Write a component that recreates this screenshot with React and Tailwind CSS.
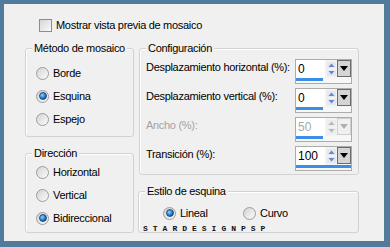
import React from 'react';

const font = { fontFamily: '"Liberation Sans", Arial, sans-serif' };

const Radio = ({ checked, label }) => (
  <div className="flex items-center gap-[4px] h-[14px]">
    <div className="w-[13px] h-[13px] rounded-full border border-[#9c9c9c] bg-gradient-to-br from-[#d4d4d4] to-[#fbfbfb] flex items-center justify-center shrink-0">
      {checked && (
        <div className="w-[8px] h-[8px] rounded-full border border-[#1b4d80] bg-[radial-gradient(circle_at_35%_35%,#8fd3ff,#0b63b8_70%)]" />
      )}
    </div>
    <span className="text-[11px] leading-[14px] tracking-[-0.3px] text-black whitespace-nowrap">{label}</span>
  </div>
);

const Group = ({ title, className, children }) => (
  <div className={`relative border border-[#d2d2d2] rounded-[3px] shadow-[inset_1px_1px_0_#ffffff] ${className}`}>
    <span className="absolute -top-[8px] left-[6px] px-[2px] bg-[#f0f0f0] text-[11px] leading-[14px] tracking-[-0.3px] text-black whitespace-nowrap">
      {title}
    </span>
    {children}
  </div>
);

const Spin = ({ value, full, disabled }) => (
  <div className="w-[57px] h-[25px] border border-[#acacac] bg-[#f7f7f7] flex flex-col shrink-0">
    <div className="flex h-[18px]">
      <div className={`flex-1 bg-white pl-[2px] text-[12px] leading-[18px] ${disabled ? 'text-[#a8a8a8]' : 'text-black'}`}>
        {value}
      </div>
      <div className="w-[12px] flex flex-col items-center justify-center gap-[2px] bg-[#f2f2f2]">
        <svg width="9" height="6" viewBox="0 0 9 6">
          <rect x="0" y="0" width="9" height="6" fill={disabled ? '#ececec' : '#e4e8f2'} />
          <path d="M1.5 5 L4.5 1.5 L7.5 5 Z" fill={disabled ? '#b8b8b8' : '#6a86cf'} />
        </svg>
        <svg width="9" height="6" viewBox="0 0 9 6">
          <rect x="0" y="0" width="9" height="6" fill={disabled ? '#ececec' : '#e4e8f2'} />
          <path d="M1.5 1 L4.5 4.5 L7.5 1 Z" fill={disabled ? '#b8b8b8' : '#6a86cf'} />
        </svg>
      </div>
      <div
        className={`w-[14px] h-[17px] flex items-center justify-center border ${
          disabled ? 'border-[#cfcfcf] bg-[#f0f0f0]' : 'border-[#6b6b6b] bg-[#d5d5d5]'
        }`}
      >
        <svg width="8" height="5" viewBox="0 0 8 5">
          <path d="M0 0 L8 0 L4 5 Z" fill={disabled ? '#b0b0b0' : '#000000'} />
        </svg>
      </div>
    </div>
    <div className="h-[3px] flex">
      <div className={`h-[3px] bg-[#3a8ee6] ${full ? 'w-full' : 'w-[27px]'}`} />
    </div>
  </div>
);

const ConfigRow = ({ label, value, full, disabled }) => (
  <div className="flex justify-between items-start">
    <span
      className={`mt-[1px] text-[11px] leading-[14px] tracking-[-0.3px] whitespace-nowrap ${
        disabled ? 'text-[#a3a3a3]' : 'text-black'
      }`}
    >
      {label}
    </span>
    <Spin value={value} full={full} disabled={disabled} />
  </div>
);

export default function App() {
  return (
    <div className="w-[390px] h-[247px] bg-[#527a9a] pt-[4px] pl-[4px] pr-[6px] pb-[6px]" style={font}>
      <div className="h-full bg-[#f0f0f0] flex flex-col">
        <div className="flex items-center gap-[4px] pt-[14px] pl-[35px]">
          <div className="w-[13px] h-[13px] border border-[#8c8c8c] bg-gradient-to-br from-[#d6d6d6] to-[#f9f9f9]" />
          <span className="text-[11px] leading-[14px] tracking-[-0.3px] text-black">
            Mostrar vista previa de mosaico
          </span>
        </div>

        <div className="flex gap-[5px] pl-[21px] mt-[16px]">
          <div className="w-[109px] flex flex-col gap-[16px]">
            <Group title="Método de mosaico" className="h-[89px] flex flex-col gap-[9px] pt-[17px] pl-[10px]">
              <Radio label="Borde" />
              <Radio label="Esquina" checked />
              <Radio label="Espejo" />
            </Group>
            <Group title="Dirección" className="h-[80px] flex flex-col gap-[9px] pt-[11px] pl-[10px]">
              <Radio label="Horizontal" />
              <Radio label="Vertical" />
              <Radio label="Bidireccional" checked />
            </Group>
          </div>

          <div className="w-[220px] flex flex-col gap-[16px]">
            <Group title="Configuración" className="h-[127px] flex flex-col gap-[4px] pt-[10px] pl-[6px] pr-[6px]">
              <ConfigRow label="Desplazamiento horizontal (%):" value="0" />
              <ConfigRow label="Desplazamiento vertical (%):" value="0" />
              <ConfigRow label="Ancho (%):" value="50" disabled />
              <ConfigRow label="Transición (%):" value="100" full />
            </Group>
            <Group title="Estilo de esquina" className="h-[42px] -ml-[1px] flex flex-col pt-[14px]">
              <div className="flex pl-[24px]">
                <div className="w-[80px]">
                  <Radio label="Lineal" checked />
                </div>
                <Radio label="Curvo" />
              </div>
              <div
                className="pl-[4px] mt-[5px] text-[8px] leading-[7px] font-bold tracking-[5px] text-[#111]"
                style={{ fontFamily: '"Liberation Mono", monospace' }}
              >
                STARDESIGNPSP
              </div>
            </Group>
          </div>
        </div>
      </div>
    </div>
  );
}
